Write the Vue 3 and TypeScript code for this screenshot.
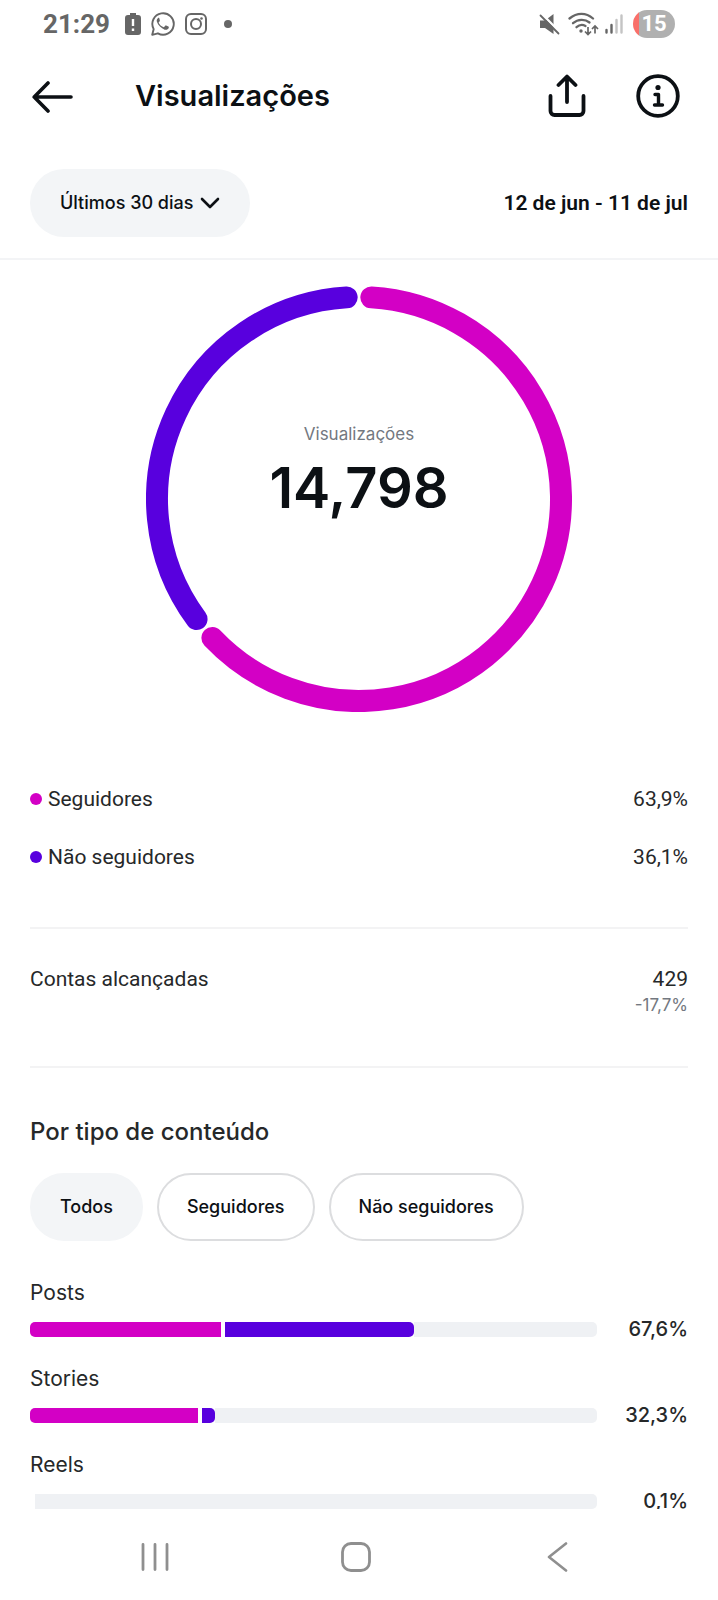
<script setup lang="ts">
import { computed, ref } from 'vue'

interface Share {
  label: string
  value: string
  percent: number
  tone: 'pink' | 'purple'
}

interface ContentRow {
  label: string
  value: string
  followers: number
  others: number
}

const shares: Share[] = [
  { label: 'Seguidores', value: '63,9%', percent: 63.9, tone: 'pink' },
  { label: 'Não seguidores', value: '36,1%', percent: 36.1, tone: 'purple' },
]

const rows: ContentRow[] = [
  { label: 'Posts', value: '67,6%', followers: 33.6, others: 33.4 },
  { label: 'Stories', value: '32,3%', followers: 29.6, others: 2.4 },
  { label: 'Reels', value: '0,1%', followers: 0.1, others: 0 },
]

const periods = ['Últimos 30 dias']
const period = ref(periods[0])

const filters = ['Todos', 'Seguidores', 'Não seguidores']
const activeFilter = ref('Todos')

const center = 213
const radius = 202
const padAngle = 3.5

function pointAt(angle: number): string {
  const rad = (angle * Math.PI) / 180
  const x = center + radius * Math.sin(rad)
  const y = center - radius * Math.cos(rad)
  return `${x.toFixed(2)} ${y.toFixed(2)}`
}

const arcs = computed(() => {
  let cursor = 0
  return shares.map((share) => {
    const start = cursor + padAngle
    cursor += share.percent * 3.6
    const end = cursor - padAngle
    const large = end - start > 180 ? 1 : 0
    return {
      tone: share.tone,
      d: `M${pointAt(start)} A${radius} ${radius} 0 ${large} 1 ${pointAt(end)}`,
    }
  })
})
</script>

<template>
  <div class="screen">
    <div class="status">
      <div class="status-side">
        <span class="clock">21:29</span>
        <svg width="16" height="22" viewBox="0 0 16 22" aria-hidden="true">
          <path fill="#666" d="M5 0h6v2h2a3 3 0 0 1 3 3v14a3 3 0 0 1-3 3H3a3 3 0 0 1-3-3V5a3 3 0 0 1 3-3h2z" />
          <path stroke="#fff" stroke-width="2.4" d="M8 6v7M8 15.500v2.500" />
        </svg>
        <svg width="24" height="24" viewBox="0 0 24 24" aria-hidden="true">
          <path fill="none" stroke="#666" stroke-width="1.900" stroke-linejoin="round" d="M1.200 22.800l1.500-5.700A10.700 10.700 0 1 1 6.900 21.300z" />
          <path fill="#666" d="M8.300 6.200c-.4-.5-1-.5-1.400 0C5.700 7.300 5.400 8.600 6 10.100c1.200 3.300 4.200 6.400 7.700 7.600 1.700.5 3.500-.2 4-1.700.2-.7.200-1.100-.3-1.400l-2.200-1.100c-.5-.2-.8-.1-1.100.3l-.9 1.100c-.3.300-.6.300-1 .1-2-.9-3.400-2.300-4.400-4.100-.2-.4-.1-.6.200-.9.900-1 1-1.300.8-1.800z" />
        </svg>
        <svg width="22" height="22" viewBox="0 0 22 22" aria-hidden="true">
          <g fill="none" stroke="#666" stroke-width="2">
            <rect x="1" y="1" width="20" height="20" rx="5" />
            <circle cx="11" cy="11" r="5" />
          </g>
          <circle cx="16.500" cy="5.500" r="1.300" fill="#666" />
        </svg>
        <span class="more-dot"></span>
      </div>
      <div class="status-side">
        <svg class="muted" width="21" height="22" viewBox="0 0 21 22" aria-hidden="true">
          <path fill="#666" d="M1 7.500h5L14.500 1v20L6 15H1z" />
          <path stroke="#fff" stroke-width="2.500" d="M2.500.5l18 18.500" />
          <path stroke="#666" stroke-width="1.800" stroke-linecap="round" d="M1.500 2.500l18 18" />
        </svg>
        <svg width="31" height="24" viewBox="0 0 31 24" aria-hidden="true">
          <g fill="none" stroke="#666" stroke-width="2.300" stroke-linecap="round">
            <path d="M1.500 6.500C9 .2 18 .2 25 6.500" />
            <path d="M5 11.200C10 6.800 17 6.800 21.500 10.500" />
            <path d="M8.500 15.200C11.500 12.600 15 12.600 17.500 14" />
          </g>
          <circle cx="13" cy="19" r="1.700" fill="#666" />
          <path fill="none" stroke="#666" stroke-width="1.700" d="M20 15v7.500M17 19.500l3 3 3-3M27 21.500v-7.500M24 17l3-3 3 3" />
        </svg>
        <svg class="signal" width="18" height="20" viewBox="0 0 18 20" aria-hidden="true">
          <g stroke-width="2.400" stroke-linecap="round">
            <path stroke="#666" d="M1.500 16v2.500M6.500 11v7.500" />
            <path stroke="#c4c4c4" d="M11.500 6v12.500M16.500 1.500v17" />
          </g>
        </svg>
        <span class="charge">15</span>
      </div>
    </div>

    <header class="top">
      <button class="icon-button" type="button" aria-label="Voltar">
        <svg width="42" height="34" viewBox="0 0 42 34">
          <path fill="none" stroke="#0c1014" stroke-width="3.600" stroke-linecap="round" stroke-linejoin="round" d="M17 4L3.200 18 17 32M3.200 18H40" />
        </svg>
      </button>
      <h1>Visualizações</h1>
      <button class="icon-button share" type="button" aria-label="Compartilhar">
        <svg width="38" height="44" viewBox="0 0 38 44">
          <path fill="none" stroke="#0c1014" stroke-width="3.800" stroke-linecap="round" stroke-linejoin="round" d="M2.500 22v15a4 4 0 0 0 4 4h25a4 4 0 0 0 4-4V22M19 28V3M10.500 11L19 2.500 27.500 11" />
        </svg>
      </button>
      <button class="icon-button" type="button" aria-label="Informações">
        <svg width="44" height="44" viewBox="0 0 44 44">
          <circle cx="22" cy="22" r="19.800" fill="none" stroke="#0c1014" stroke-width="3.800" />
          <circle cx="22" cy="13.500" r="2.600" fill="#0c1014" />
          <path fill="none" stroke="#0c1014" stroke-width="3.400" stroke-linecap="round" stroke-linejoin="round" d="M19 20.500h3.500v10.500M18.500 31h8" />
        </svg>
      </button>
    </header>

    <div class="range">
      <label class="period">
        <select v-model="period" aria-label="Período">
          <option v-for="item in periods" :key="item" :value="item">{{ item }}</option>
        </select>
        <svg width="20" height="12" viewBox="0 0 20 12" aria-hidden="true">
          <path fill="none" stroke="#0c1014" stroke-width="2.600" stroke-linecap="round" stroke-linejoin="round" d="M2 2l8 8 8-8" />
        </svg>
      </label>
      <span class="dates">12 de jun - 11 de jul</span>
    </div>

    <main>
      <section class="donut">
        <svg viewBox="0 0 426 426" aria-hidden="true">
          <path v-for="arc in arcs" :key="arc.tone" :class="arc.tone" :d="arc.d" />
        </svg>
        <div class="total">
          <span class="total-label">Visualizações</span>
          <strong>14,798</strong>
        </div>
      </section>

      <dl class="legend">
        <div v-for="share in shares" :key="share.label" class="line">
          <dt><span class="dot" :class="share.tone"></span>{{ share.label }}</dt>
          <dd>{{ share.value }}</dd>
        </div>
      </dl>

      <dl class="reach">
        <div class="line">
          <dt>Contas alcançadas</dt>
          <dd>429<span class="delta">-17,7%</span></dd>
        </div>
      </dl>

      <section class="types">
        <h2>Por tipo de conteúdo</h2>
        <div class="chips">
          <button
            v-for="filter in filters"
            :key="filter"
            type="button"
            class="chip"
            :class="{ active: filter === activeFilter }"
            :aria-pressed="filter === activeFilter"
            @click="activeFilter = filter"
          >
            {{ filter }}
          </button>
        </div>
        <ul class="bars">
          <li v-for="row in rows" :key="row.label">
            <span class="bar-label">{{ row.label }}</span>
            <div class="bar-row">
              <div class="bar">
                <span v-if="row.others" class="part pink" :style="{ width: row.followers + '%' }"></span>
                <span v-if="row.others" class="part purple" :style="{ width: row.others + '%' }"></span>
                <span class="rest" :class="{ spaced: !row.others }"></span>
              </div>
              <span class="bar-value">{{ row.value }}</span>
            </div>
          </li>
        </ul>
      </section>
    </main>

    <nav class="system-nav">
      <button type="button" aria-label="Recentes">
        <svg width="30" height="30" viewBox="0 0 30 30">
          <path stroke="#8f8f8f" stroke-width="2.800" stroke-linecap="round" d="M3 2.500v25M15 2.500v25M27 2.500v25" />
        </svg>
      </button>
      <button type="button" aria-label="Início">
        <svg width="30" height="30" viewBox="0 0 30 30">
          <rect x="1.500" y="1.500" width="27" height="27" rx="8.500" fill="none" stroke="#8f8f8f" stroke-width="2.800" />
        </svg>
      </button>
      <button type="button" aria-label="Voltar ao app">
        <svg width="30" height="30" viewBox="0 0 30 30">
          <path fill="none" stroke="#8f8f8f" stroke-width="2.600" stroke-linecap="round" stroke-linejoin="round" d="M24 1.500L7 15l17 13.500" />
        </svg>
      </button>
    </nav>
  </div>
</template>

<style>
body {
  background: #fff;
}
</style>

<style scoped>
.screen {
  display: flex;
  flex-direction: column;
  height: 100vh;
  background: #fff;
  color: #262829;
  font-family: Inter, 'Liberation Sans', sans-serif;
}

h1,
h2,
dl,
dd,
ul {
  margin: 0;
  padding: 0;
}

ul {
  list-style: none;
}

svg {
  display: block;
  flex: none;
}

button {
  border: 0;
  padding: 0;
  background: none;
  color: inherit;
  font: inherit;
  cursor: pointer;
}

.status {
  flex: none;
  display: flex;
  justify-content: space-between;
  height: 48px;
  padding: 0 43px;
}

.status-side {
  display: flex;
  align-items: center;
  gap: 10px;
}

.clock {
  margin-right: 5px;
  color: #666;
  font: 700 26px/48px Roboto, sans-serif;
}

.more-dot {
  width: 8px;
  height: 8px;
  margin-left: 7px;
  border-radius: 50%;
  background: #666;
}

.muted {
  margin-right: -2px;
}

.signal {
  margin-left: -4px;
}

.charge {
  width: 42px;
  height: 28px;
  border-radius: 14px;
  background: linear-gradient(90deg, #f9706a 6px, #b0b0b0 6px);
  color: #fff;
  font: 700 22px/28px Roboto, sans-serif;
  text-align: center;
}

.top {
  flex: none;
  display: flex;
  align-items: center;
  height: 96px;
  padding: 0 38px 0 31px;
}

h1 {
  flex: 1;
  margin-left: 62px;
  color: #0c1014;
  font-size: 29px;
  font-weight: 600;
  line-height: 40px;
}

.share {
  margin-right: 50px;
}

.range {
  flex: none;
  display: flex;
  align-items: center;
  justify-content: space-between;
  padding: 25px 30px 21px;
  border-bottom: 2px solid #f3f4f6;
}

.period {
  display: grid;
  align-items: center;
  border-radius: 34px;
  background: #f3f5f7;
}

.period select,
.period svg {
  grid-area: 1 / 1;
}

.period select {
  appearance: none;
  height: 68px;
  padding: 0 56px 0 30px;
  border: 0;
  background: none;
  color: #0c1014;
  font: 500 18px/24px Inter, sans-serif;
}

.period svg {
  justify-self: end;
  margin-right: 30px;
  pointer-events: none;
}

.dates {
  color: #0c1014;
  font: 600 21px/28px Roboto, sans-serif;
}

main {
  flex: 1;
  min-height: 0;
  overflow-y: auto;
  scrollbar-width: none;
  padding: 0 30px;
}

.donut {
  display: grid;
  justify-content: center;
  grid-template-columns: minmax(0, 426px);
  padding-top: 26px;
}

.donut svg,
.total {
  grid-area: 1 / 1;
}

.donut svg {
  width: 100%;
}

.donut path {
  fill: none;
  stroke-width: 22px;
  stroke-linecap: round;
}

.donut .pink {
  stroke: #d300c5;
}

.donut .purple {
  stroke: #5800de;
}

.total {
  display: flex;
  flex-direction: column;
  align-items: center;
  padding-top: 136px;
}

.total-label {
  color: #737880;
  font-size: 17px;
  line-height: 24px;
}

.total strong {
  color: #0c1014;
  font-size: 56px;
  font-weight: 600;
  line-height: 84px;
}

.line {
  display: flex;
  justify-content: space-between;
  font: 400 21px/28px Roboto, sans-serif;
}

.legend {
  display: grid;
  gap: 30px;
  padding: 73px 0 56px;
  border-bottom: 2px solid #f3f3f4;
}

.legend dt {
  display: flex;
  align-items: center;
}

.dot {
  width: 12px;
  height: 12px;
  margin-right: 6px;
  border-radius: 50%;
}

.dot.pink,
.part.pink {
  background: #d300c5;
}

.dot.purple,
.part.purple {
  background: #5800de;
}

.reach {
  padding: 36px 0 49px;
  border-bottom: 2px solid #f3f3f4;
}

.reach dd {
  text-align: right;
}

.delta {
  display: block;
  color: #737880;
  font: 400 17px/24px Inter, sans-serif;
}

h2 {
  margin-top: 48px;
  font-size: 24px;
  font-weight: 500;
  line-height: 32px;
}

.chips {
  display: flex;
  flex-wrap: wrap;
  gap: 14px;
  margin-top: 25px;
}

.chip {
  height: 68px;
  padding: 0 28px;
  border: 2px solid #dcdddf;
  border-radius: 34px;
  color: #0c1014;
  font-size: 18px;
  font-weight: 500;
  line-height: 24px;
}

.chip.active {
  border-color: #f3f5f7;
  background: #f3f5f7;
}

.bars {
  display: grid;
  gap: 22px;
  margin-top: 38px;
}

.bar-label {
  display: block;
  margin-bottom: 8px;
  font-size: 21px;
  line-height: 28px;
}

.bar-row {
  display: grid;
  grid-template-columns: 1fr 91px;
  align-items: center;
}

.bar {
  display: flex;
  gap: 4px;
  height: 15px;
  border-radius: 5px;
  overflow: hidden;
}

.part {
  flex: none;
}

.part.purple {
  border-radius: 0 5px 5px 0;
}

.part.purple + .rest {
  margin-left: -4px;
}

.rest {
  flex: 1;
  background: #eff1f4;
}

.rest.spaced {
  margin-left: 5px;
}

.bar-value {
  font-size: 20px;
  font-weight: 500;
  line-height: 28px;
  text-align: right;
}

.system-nav {
  flex: none;
  display: flex;
  justify-content: center;
  gap: 171px;
  height: 91px;
  padding: 32px 6px 0 0;
  box-sizing: border-box;
  background: #fff;
}

.system-nav button {
  height: 32px;
}
</style>
